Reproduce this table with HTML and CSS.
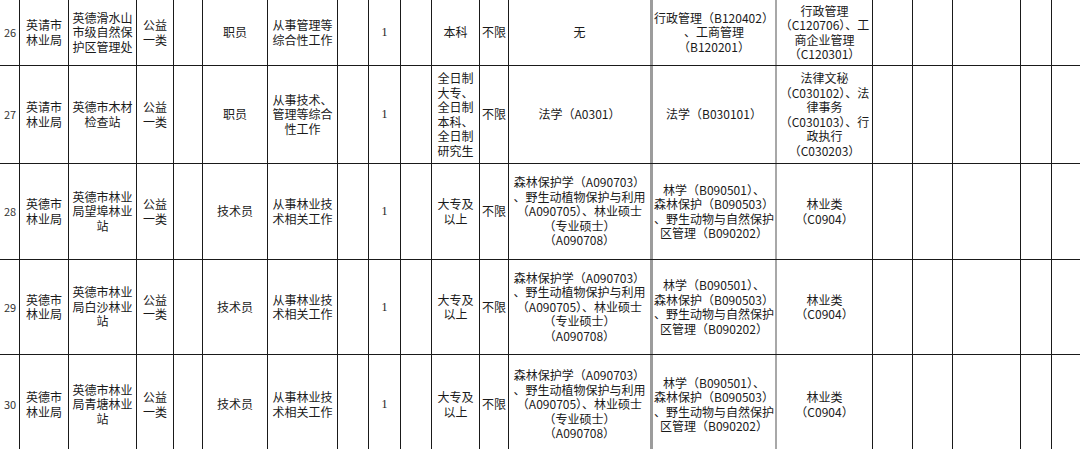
FILE: index.html
```html
<!DOCTYPE html>
<html lang="zh-CN">
<head>
<meta charset="utf-8">
<title>岗位表</title>
<link rel="stylesheet" href="styles.css">
</head>
<body>
<div class="sheet">
  <div class="row r26">
    <div class="c no">26</div>
    <div class="c">英请市<br>林业局</div>
    <div class="c">英德滑水山<br>市级自然保<br>护区管理处</div>
    <div class="c">公益<br>一类</div>
    <div class="c"></div>
    <div class="c">职员</div>
    <div class="c">从事管理等<br>综合性工作</div>
    <div class="c"></div>
    <div class="c num">1</div>
    <div class="c"></div>
    <div class="c">本科</div>
    <div class="c">不限</div>
    <div class="c g0">无</div>
    <div class="c g1">行政管理（B120402）<br>、工商管理<br>（B120201）</div>
    <div class="c">行政管理<br>（C120706）、工<br>商企业管理<br>（C120301）</div>
    <div class="c"></div>
    <div class="c"></div>
    <div class="c"></div>
    <div class="c"></div>
    <div class="c"></div>
  </div>
  <div class="row r27">
    <div class="c no">27</div>
    <div class="c">英请市<br>林业局</div>
    <div class="c">英德市木材<br>检查站</div>
    <div class="c">公益<br>一类</div>
    <div class="c"></div>
    <div class="c">职员</div>
    <div class="c">从事技术、<br>管理等综合<br>性工作</div>
    <div class="c"></div>
    <div class="c num">1</div>
    <div class="c"></div>
    <div class="c">全日制<br>大专、<br>全日制<br>本科、<br>全日制<br>研究生</div>
    <div class="c">不限</div>
    <div class="c g0">法学（A0301）</div>
    <div class="c g1">法学（B030101）</div>
    <div class="c">法律文秘<br>（C030102）、法<br>律事务<br>（C030103）、行<br>政执行<br>（C030203）</div>
    <div class="c"></div>
    <div class="c"></div>
    <div class="c"></div>
    <div class="c"></div>
    <div class="c"></div>
  </div>
  <div class="row r28">
    <div class="c no">28</div>
    <div class="c">英德市<br>林业局</div>
    <div class="c">英德市林业<br>局望埠林业<br>站</div>
    <div class="c">公益<br>一类</div>
    <div class="c"></div>
    <div class="c">技术员</div>
    <div class="c">从事林业技<br>术相关工作</div>
    <div class="c"></div>
    <div class="c num">1</div>
    <div class="c"></div>
    <div class="c">大专及<br>以上</div>
    <div class="c">不限</div>
    <div class="c g0">森林保护学（A090703）<br>、野生动植物保护与利用<br>（A090705）、林业硕士<br>（专业硕士）<br>（A090708）</div>
    <div class="c g1">林学（B090501）、<br>森林保护（B090503）<br>、野生动物与自然保护<br>区管理（B090202）</div>
    <div class="c">林业类<br>（C0904）</div>
    <div class="c"></div>
    <div class="c"></div>
    <div class="c"></div>
    <div class="c"></div>
    <div class="c"></div>
  </div>
  <div class="row r29">
    <div class="c no">29</div>
    <div class="c">英德市<br>林业局</div>
    <div class="c">英德市林业<br>局白沙林业<br>站</div>
    <div class="c">公益<br>一类</div>
    <div class="c"></div>
    <div class="c">技术员</div>
    <div class="c">从事林业技<br>术相关工作</div>
    <div class="c"></div>
    <div class="c num">1</div>
    <div class="c"></div>
    <div class="c">大专及<br>以上</div>
    <div class="c">不限</div>
    <div class="c g0">森林保护学（A090703）<br>、野生动植物保护与利用<br>（A090705）、林业硕士<br>（专业硕士）<br>（A090708）</div>
    <div class="c g1">林学（B090501）、<br>森林保护（B090503）<br>、野生动物与自然保护<br>区管理（B090202）</div>
    <div class="c">林业类<br>（C0904）</div>
    <div class="c"></div>
    <div class="c"></div>
    <div class="c"></div>
    <div class="c"></div>
    <div class="c"></div>
  </div>
  <div class="row r30">
    <div class="c no">30</div>
    <div class="c">英德市<br>林业局</div>
    <div class="c">英德市林业<br>局青塘林业<br>站</div>
    <div class="c">公益<br>一类</div>
    <div class="c"></div>
    <div class="c">技术员</div>
    <div class="c">从事林业技<br>术相关工作</div>
    <div class="c"></div>
    <div class="c num">1</div>
    <div class="c"></div>
    <div class="c">大专及<br>以上</div>
    <div class="c">不限</div>
    <div class="c g0">森林保护学（A090703）<br>、野生动植物保护与利用<br>（A090705）、林业硕士<br>（专业硕士）<br>（A090708）</div>
    <div class="c g1">林学（B090501）、<br>森林保护（B090503）<br>、野生动物与自然保护<br>区管理（B090202）</div>
    <div class="c">林业类<br>（C0904）</div>
    <div class="c"></div>
    <div class="c"></div>
    <div class="c"></div>
    <div class="c"></div>
    <div class="c"></div>
  </div>
</div>
</body>
</html>
```

FILE: styles.css
```css
html, body {
  margin: 0;
  padding: 0;
  background: #ffffff;
  overflow: hidden;
}

.sheet {
  width: 1120px;
  font-family: "Noto Sans CJK SC", "Noto Sans", sans-serif;
  font-size: 12px;
  line-height: 14.5px;
  color: #1a1a1a;
}

.row {
  display: grid;
  grid-template-columns: 20px 49px 68px 37px 29px 65px 70px 31px 32px 31px 48px 29px 144px 124px 96px 40px 40px 68px 31px 68px;
  border-bottom: 1px solid #1a1a1a;
  box-sizing: border-box;
}

.r26 { height: 66px; }
.r27 { height: 98px; }
.r28 { height: 96px; }
.r29 { height: 95px; }
.r30 { height: 100px; }

.c {
  display: flex;
  align-items: center;
  justify-content: center;
  text-align: center;
  white-space: nowrap;
  border-right: 1px solid #1a1a1a;
  box-sizing: border-box;
  overflow: hidden;
}

.c.no {
  font-size: 11px;
  justify-content: flex-start;
  padding-left: 4px;
  color: #333;
}

.c.num {
  font-family: "Liberation Serif", serif;
  font-size: 12px;
}

.c.g0 {
  border-right: 3px solid #9c9c9c;
}

.c.g1 {
  border-right: 2px solid #a8a8a8;
}
```
